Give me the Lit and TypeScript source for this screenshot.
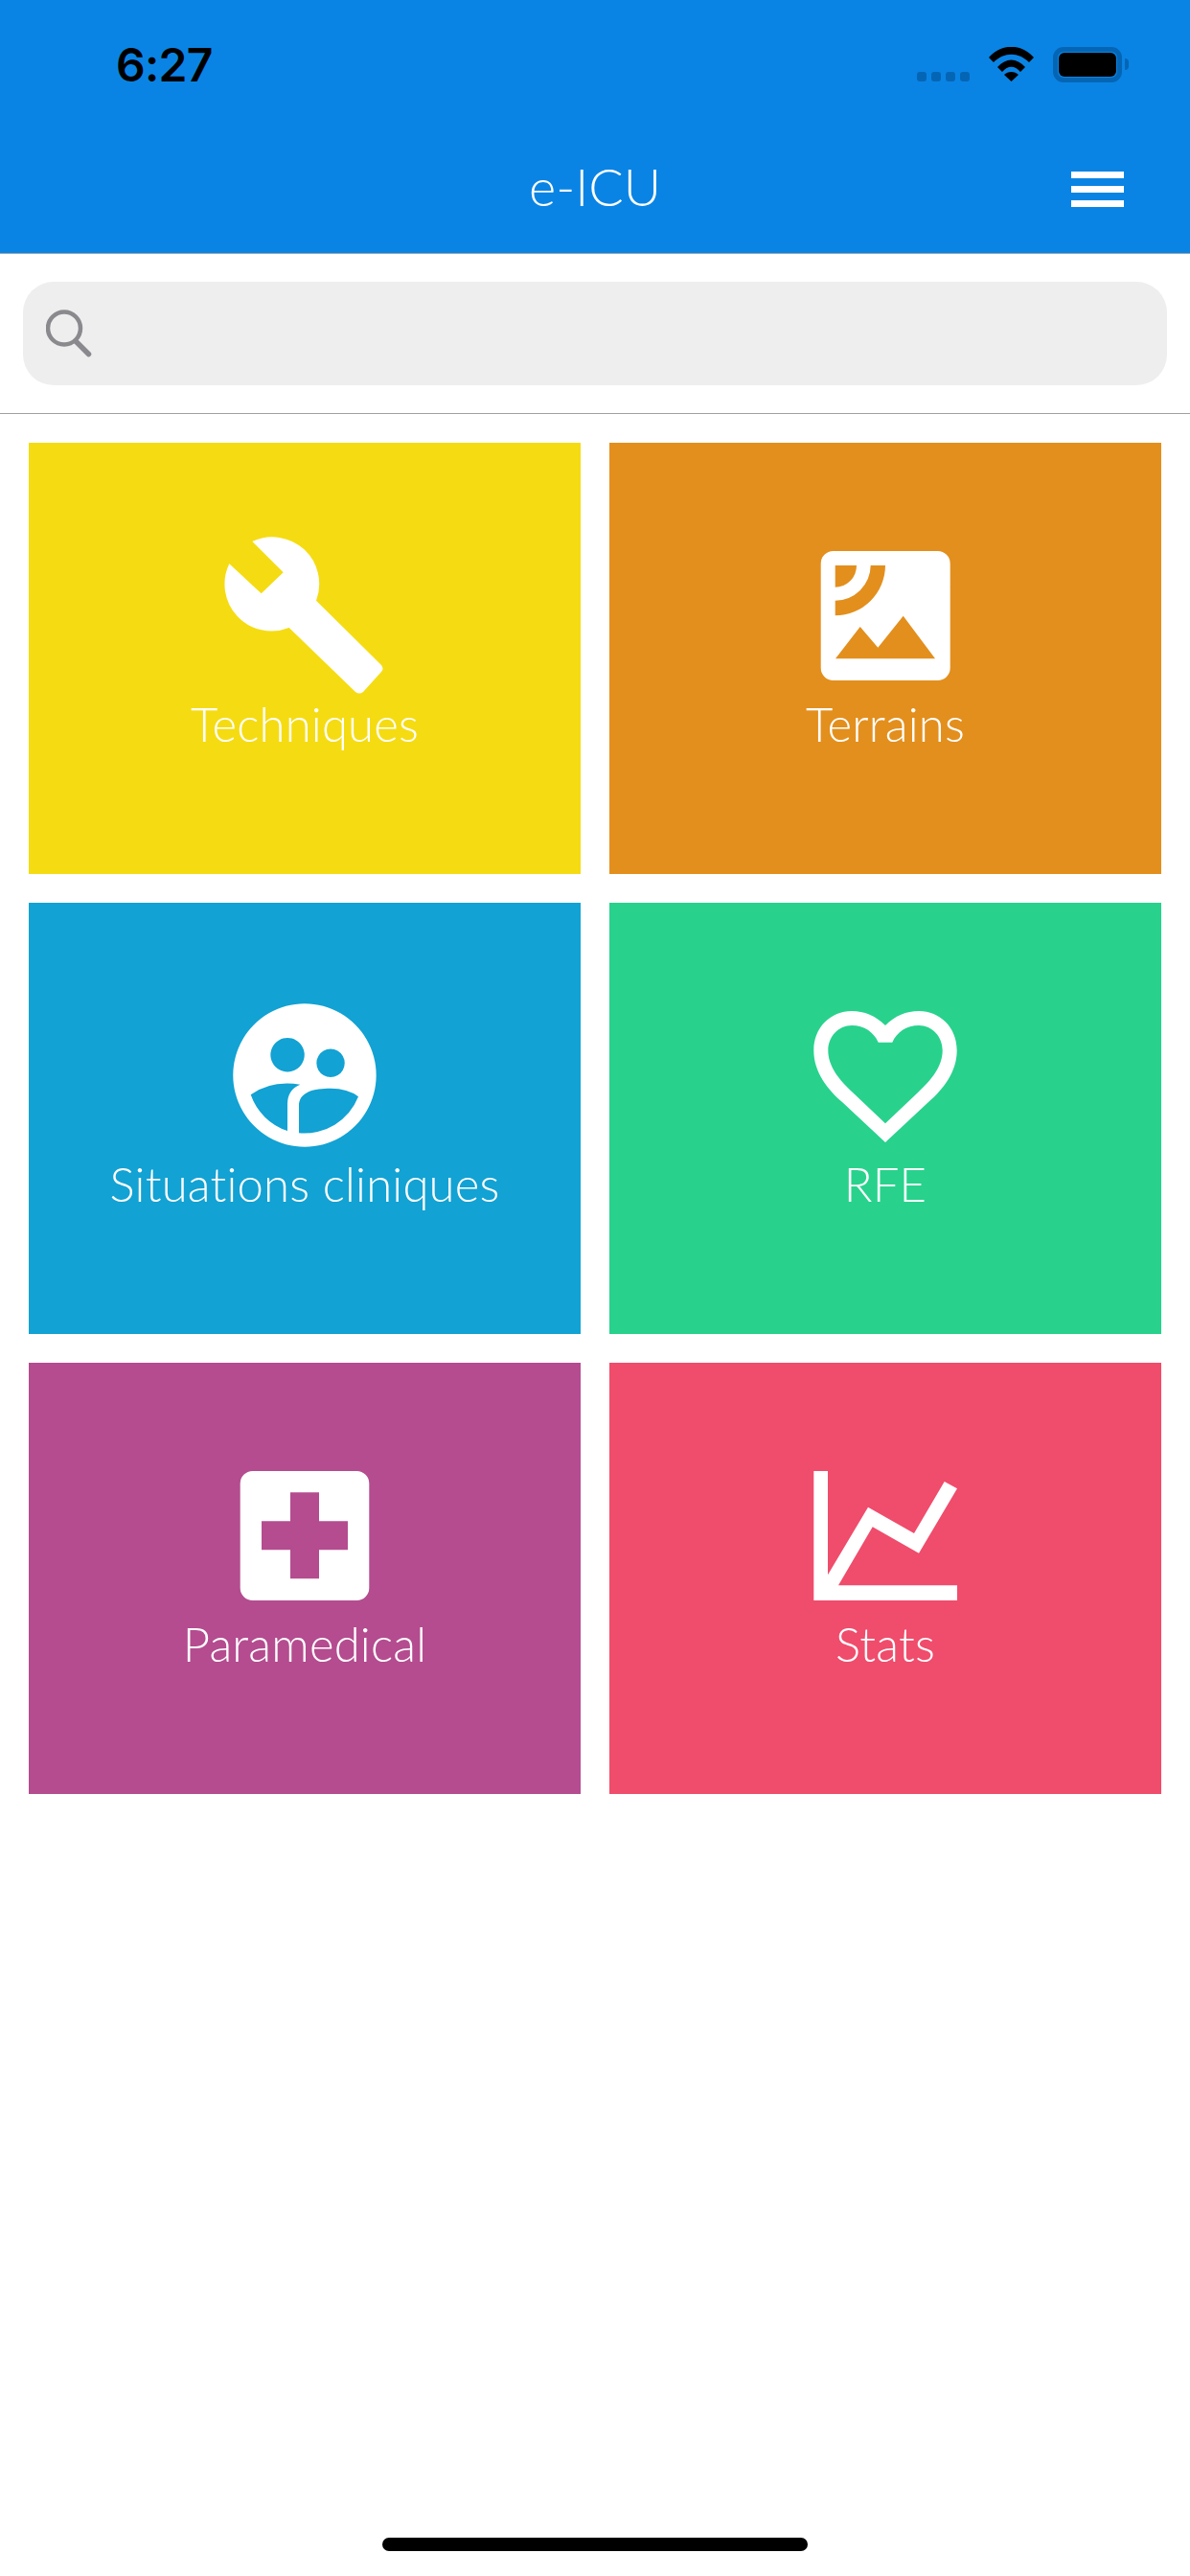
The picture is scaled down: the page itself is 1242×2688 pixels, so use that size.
import { LitElement, css, html, svg } from "lit";
import { customElement } from "lit/decorators.js";

const ICONS = {
  wrench: svg`<path d="M35.3 8A49 49 0 0 1 102 69.7L170 137Q173 141 170 144L151 165Q147 168 143 165L73.7 98A49 49 0 0 1 11.3 31.3L44.7 62.3L67.7 40.3Z"/>`,
  terrain: svg`<path fill-rule="evenodd" d="M35.7 18H144.7A13 13 0 0 1 157.7 31V140A13 13 0 0 1 144.7 153H35.7A13 13 0 0 1 22.7 140V31A13 13 0 0 1 35.7 18ZM37.7 33V55.7A22.5 22.5 0 0 0 60 33ZM74.7 33A37 37 0 0 1 37.7 69.7V85.3A52.5 52.5 0 0 0 90 33ZM38 130.3H142L108.7 85.7L82.3 118.7L63.7 97Z"/>`,
  people: svg`<path fill-rule="evenodd" d="M90 10.3A74.7 74.7 0 1 1 89.9 10.3ZM72 46A17.7 17.7 0 1 0 72.1 46ZM117 57.6A14.7 14.7 0 1 0 117.1 57.6ZM33.7 105.3Q55 90 85.3 94.7Q72 100 72 115V143A60.5 60.5 0 0 1 33.7 105.3ZM146 107.3Q135 98.7 117 98.7C100 98.7 84 102 84 117V145.3A60.5 60.5 0 0 0 146 107.3Z"/>`,
  heart: svg`<path fill-rule="evenodd" d="M90 33C100 23 112 18 125 18C147 18 164.7 35 164.7 59C164.7 82 150 100 135 113L90 155L45 113C30 100 15.3 82 15.3 59C15.3 35 33 18 55 18C68 18 80 23 90 33ZM97.3 50.7C102 40 112 33 125 33C139 33 149.7 45 149.7 59C149.7 76 138 90 124 103L90 135.3L56 103C42 90 30.3 76 30.3 59C30.3 45 41 33 55 33C68 33 78 40 82.7 50.7Z"/>`,
  cross: svg`<path fill-rule="evenodd" d="M35.7 18H144.3A13 13 0 0 1 157.3 31V140A13 13 0 0 1 144.3 153H35.7A13 13 0 0 1 22.7 140V31A13 13 0 0 1 35.7 18ZM75 40.3V70.3H45V100.3H75V130.3H105V100.3H135V70.3H105V40.3Z"/>`,
  chart: svg`<path d="M15.3 18H30V126.3L72 55.7L120 83L151.7 29L165 36.3L125 103.7L76.7 76.3L41 137.3H165V153H15.3Z"/>`,
};

const TILES = [
  { label: "Techniques", color: "#f5dc12", icon: ICONS.wrench },
  { label: "Terrains", color: "#e38f1d", icon: ICONS.terrain },
  { label: "Situations cliniques", color: "#12a2d3", icon: ICONS.people },
  { label: "RFE", color: "#28d28c", icon: ICONS.heart },
  { label: "Paramedical", color: "#b44c8f", icon: ICONS.cross },
  { label: "Stats", color: "#f04c6c", icon: ICONS.chart },
];

@customElement("app-root")
export class AppRoot extends LitElement {
  static styles = css`
    :host {
      display: block;
      font-family: "Lato", "Liberation Sans", sans-serif;
      background: #fff;
    }

    * {
      box-sizing: border-box;
    }

    .page {
      display: flex;
      flex-direction: column;
      min-height: 2688px;
    }

    .header {
      height: 265px;
      background: #0a84e4;
      border-bottom: 1px solid #9aa6b0;
    }

    .status {
      height: 165px;
      display: flex;
      align-items: flex-start;
      padding: 44px 64px 0 121px;
    }

    .time {
      font-family: "Inter", "Liberation Sans", sans-serif;
      font-size: 48px;
      line-height: 48px;
      font-weight: 600;
      letter-spacing: -0.7px;
      color: #000;
    }

    .status-icons {
      margin-left: auto;
      display: flex;
      align-items: flex-start;
      padding-top: 5px;
    }

    .dots {
      display: flex;
      gap: 5px;
      margin-top: 26px;
      margin-right: 20px;
    }

    .dots span {
      width: 10px;
      height: 10px;
      border-radius: 3px;
      background: #0565b5;
    }

    .wifi {
      width: 47px;
      height: 36px;
      margin-right: 20px;
    }

    .battery {
      width: 72px;
      height: 37px;
      border: 5px solid #0565b5;
      border-radius: 11px;
      padding: 1px;
    }

    .battery span {
      display: block;
      height: 100%;
      background: #000;
      border-radius: 6px;
    }

    .nub {
      width: 4px;
      height: 12px;
      margin: 12px 0 0 3px;
      background: #0565b5;
      border-radius: 0 4px 4px 0;
    }

    .nav {
      display: grid;
      grid-template-columns: 1fr auto 1fr;
      align-items: center;
      padding-right: 69px;
      padding-left: 69px;
      height: 60px;
    }

    .title {
      grid-column: 2;
      font-size: 54px;
      font-weight: 300;
      line-height: 60px;
      color: #fff;
    }

    .menu {
      justify-self: end;
      display: flex;
      flex-direction: column;
      gap: 8px;
      width: 55px;
      margin-top: 4px;
    }

    .menu span {
      height: 7px;
      background: #fff;
    }

    .search-wrap {
      padding: 29px 24px 29px;
      border-bottom: 1px solid #a0a0a0;
    }

    .search {
      height: 108px;
      display: flex;
      align-items: center;
      padding-left: 24px;
      background: #eeeeee;
      border-radius: 32px;
    }

    .search svg {
      width: 48px;
      height: 50px;
    }

    .grid {
      display: grid;
      grid-template-columns: 576px 576px;
      grid-auto-rows: 450px;
      gap: 30px;
      padding: 30px;
    }

    .tile {
      display: flex;
      flex-direction: column;
      align-items: center;
      padding-top: 95px;
      color: #fff;
    }

    .tile svg {
      width: 180px;
      height: 170px;
      fill: #fff;
      overflow: visible;
    }

    .label {
      font-size: 49px;
      font-weight: 300;
      line-height: 60px;
      letter-spacing: 0.2px;
      margin-top: -2px;
    }

    .home {
      margin-top: auto;
      align-self: center;
      width: 444px;
      height: 14px;
      margin-bottom: 26px;
      background: #000;
      border-radius: 7px;
    }
  `;

  render() {
    return html`
      <div class="page">
        <div class="header">
          <div class="status">
            <div class="time">6:27</div>
            <div class="status-icons">
              <div class="dots"><span></span><span></span><span></span><span></span></div>
              <svg class="wifi" viewBox="0 0 47 36">
                <path d="M0 11C13 -4 34 -4 47 11L42 16C31 5 16 5 5 16Z" />
                <path d="M9 21C18 11 29 11 38 21L33 26C27 19 20 19 14 26Z" />
                <path d="M23.5 36L16 29C20 25 27 25 31 29Z" />
              </svg>
              <div class="battery"><span></span></div>
              <div class="nub"></div>
            </div>
          </div>
          <div class="nav">
            <div class="title">e-ICU</div>
            <div class="menu"><span></span><span></span><span></span></div>
          </div>
        </div>
        <div class="search-wrap">
          <div class="search">
            <svg viewBox="0 0 48 50" fill="none" stroke="#8a8a8e" stroke-width="4.5">
              <circle cx="19" cy="19.5" r="17" />
              <path d="M31 33L44.5 46.5" stroke-width="5.5" stroke-linecap="round" />
            </svg>
          </div>
        </div>
        <div class="grid">
          ${TILES.map(
            (t) => html`
              <div class="tile" style="background:${t.color}">
                <svg viewBox="0 0 180 170">${t.icon}</svg>
                <div class="label">${t.label}</div>
              </div>
            `
          )}
        </div>
        <div class="home"></div>
      </div>
    `;
  }
}
